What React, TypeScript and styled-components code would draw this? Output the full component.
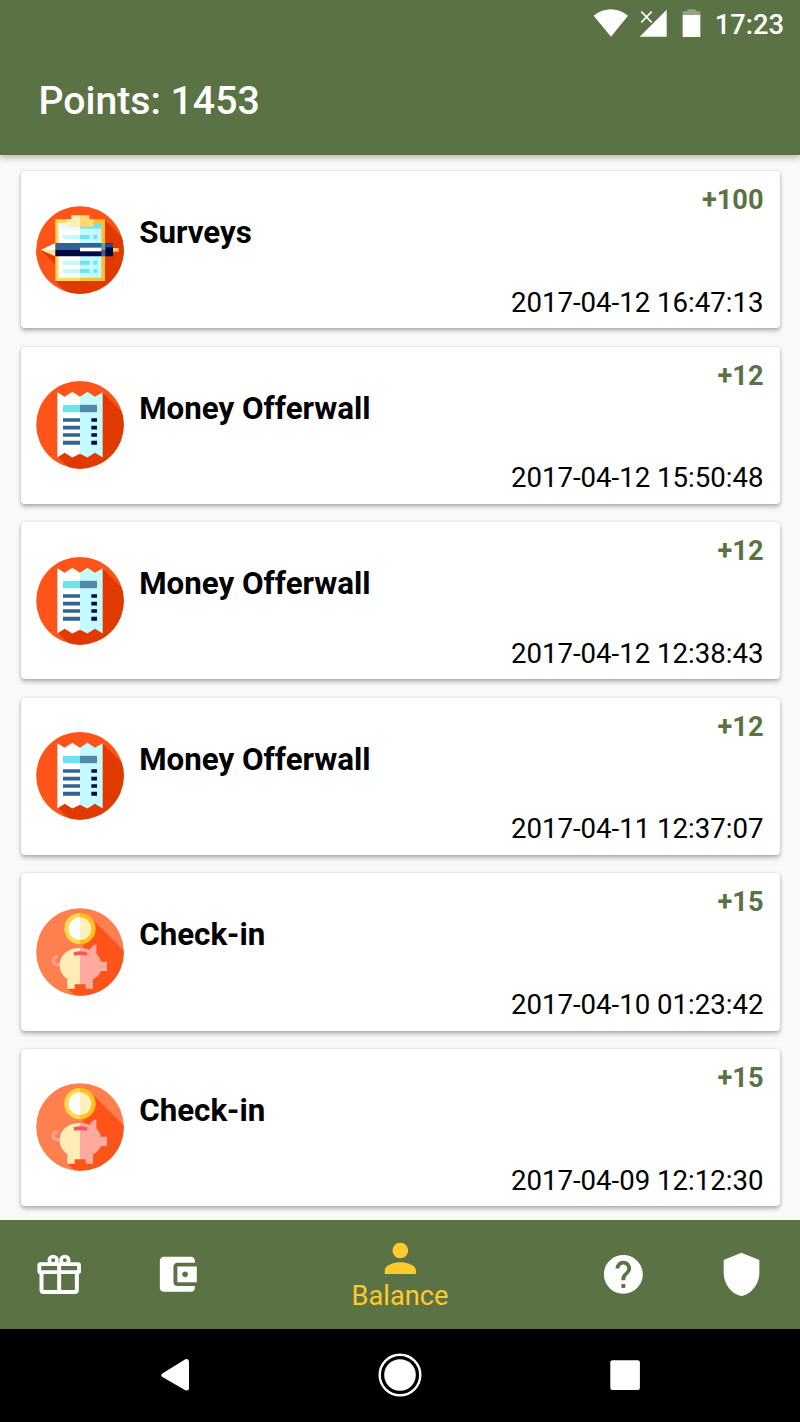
import React from 'react';
import styled, { createGlobalStyle } from 'styled-components';

const GREEN = '#5b7344';
const YELLOW = '#ffca2c';

const GlobalStyle = createGlobalStyle`
  * { box-sizing: border-box; }
  body { margin: 0; background: #fafafa; font-family: Roboto, sans-serif; }
  svg { display: block; flex: none; }
`;

const Screen = styled.div`
  display: flex;
  flex-direction: column;
  width: 800px;
  height: 1422px;
  overflow: hidden;
  background: #f9f9f9;
`;

const Header = styled.header`
  flex: none;
  height: 155px;
  background: ${GREEN};
  color: #fff;
  box-shadow: 0 2px 7px rgba(0, 0, 0, 0.32);
`;

const StatusBar = styled.div`
  display: flex;
  align-items: center;
  justify-content: flex-end;
  height: 47px;
  padding-right: 16px;
`;

const Clock = styled.span`
  margin-left: 14px;
  font-size: 27.3px;
  font-weight: 500;
  line-height: 47px;
  padding-top: 3px;
`;

const StatusIcon = styled.svg<{ $gap?: number }>`
  margin-left: ${(p) => p.$gap ?? 0}px;
  margin-top: -1px;
`;

const Title = styled.h1`
  margin: 0;
  padding-left: 38.5px;
  font-size: 39.2px;
  font-weight: 500;
  line-height: 108px;
`;

const List = styled.main`
  flex: 1;
  min-height: 0;
  display: flex;
  flex-direction: column;
  gap: 18.15px;
  padding: 16px 20.5px 0;
`;

const Card = styled.article`
  flex: none;
  display: grid;
  grid-template-columns: 88px 1fr auto;
  column-gap: 15.2px;
  height: 157.4px;
  padding: 0 16px 0 15.5px;
  border-radius: 4px;
  background: #fff;
  box-shadow: 0 3px 4px rgba(0, 0, 0, 0.26), 0 0 3px rgba(0, 0, 0, 0.16);
`;

const Badge = styled.svg`
  align-self: center;
`;

const Name = styled.h2`
  margin: 0;
  padding-top: 43px;
  font-size: 31.3px;
  font-weight: 700;
  line-height: 38px;
  color: #000;
`;

const Details = styled.div`
  display: flex;
  flex-direction: column;
  justify-content: space-between;
  align-items: flex-end;
  padding: 12px 0 8.5px;
  font-size: 27.6px;
  line-height: 34px;
  color: #000;
`;

const Amount = styled.span`
  font-size: 27.2px;
  font-weight: 700;
  color: ${GREEN};
`;

const TabBar = styled.nav`
  flex: none;
  display: grid;
  grid-template-columns: 118px 118px 1fr 118px 118px;
  height: 109px;
  background: ${GREEN};
  color: #fff;
`;

const Tab = styled.div<{ $active?: boolean }>`
  display: flex;
  flex-direction: column;
  align-items: center;
  justify-content: ${(p) => (p.$active ? 'flex-start' : 'center')};
  padding-top: ${(p) => (p.$active ? 15 : 0)}px;
  color: ${(p) => (p.$active ? YELLOW : '#fff')};
`;

const TabLabel = styled.span`
  font-size: 27.2px;
  line-height: 32px;
  margin-top: -1px;
`;

const SystemBar = styled.footer`
  flex: none;
  display: grid;
  grid-template-columns: repeat(3, 225px);
  justify-content: center;
  justify-items: center;
  align-items: center;
  height: 93.5px;
  background: #000;
`;

const SurveyBadge = () => (
  <Badge width="88" height="88" viewBox="18 17 264 264">
    <clipPath id="survey-disc"><circle cx="150" cy="149" r="131.5" /></clipPath>
    <g clipPath="url(#survey-disc)">
      <path fill="#ff5419" d="M0 0h300v300H0z" />
      <path fill="#e03a00" d="M223 57l77 77v166H134l-58-58-43-92 120-40z" />
      <path fill="#ff5419" d="M0 150h33l43 41v109H0z" />
      <path fill="#e03a00" d="M33 150l43 41v51l90 58V150z" />
    </g>
    <path fill="#ffda5b" d="M76 57h74v185H76z" />
    <path fill="#fec02d" d="M150 57h75v185h-75z" />
    <path fill="#fff" d="M86 68h64v164H86z" />
    <path fill="#c1fbff" d="M150 68h64v164h-64z" />
    <path fill="#e4fdff" d="M86 68h64v22H86z" />
    <path fill="#73e1ef" d="M150 68h64v17h-64z" />
    <path fill="#c4f8fb" d="M98 104h52v12H98zM98 181h52v12H98zM98 206h52v12H98z" />
    <path fill="#73e1ef" d="M150 104h29v12h-29zM190 104h12v12h-12zM150 181h29v12h-29zM190 181h12v12h-12zM150 206h29v12h-29zM190 206h12v12h-12z" />
    <path fill="#fff0b5" d="M109 57h15V45h26v34h-41z" />
    <path fill="#ffda70" d="M150 45h28v12h13v22h-41z" />
    <path fill="#fff" d="M32 149l44-21v21z" />
    <path fill="#ffe29a" d="M32 149h44v19z" />
    <path fill="#316493" d="M76 128h150v21H76z" />
    <path fill="#000944" d="M76 149h150v19H76zM226 129h23v39h-23z" />
    <path fill="#28507e" d="M226 129h23v12h-23z" />
    <path fill="#fff" d="M150 142h64v11h-64z" />
    <path fill="#d3f9ff" d="M214 128h12v40h-12z" opacity=".35" />
    <path fill="#ffc87a" d="M249 143h17v11h-17z" />
  </Badge>
);

const ReceiptBadge = () => (
  <Badge width="88" height="88" viewBox="18 18.5 264 264">
    <clipPath id="receipt-disc"><circle cx="150" cy="150" r="131.5" /></clipPath>
    <g clipPath="url(#receipt-disc)">
      <path fill="#ff5419" d="M0 0h300v300H0z" />
      <path fill="#e03a00" d="M218 53l82 82v165H139l-57-56 68-94z" />
    </g>
    <path fill="#fff" d="M82 52l22 14 23-15 23 15v171l-23 11-23-14-22 14z" />
    <path fill="#c4fbff" d="M150 66l22-15 23 15 23-14v196l-23-14-23 14-22-11z" />
    <path fill="#6ee3f0" d="M99 90h51v22H99z" />
    <path fill="#5487aa" d="M150 90h51v22h-51z" />
    <path fill="#316493" d="M99 130h51v11H99zM99 153h51v11H99zM99 175h51v11H99zM99 198h51v12H99z" />
    <path fill="#000944" d="M184 130h17v11h-17zM184 153h17v11h-17zM184 175h17v11h-17zM184 198h17v12h-17z" />
  </Badge>
);

const PiggyBadge = () => (
  <Badge width="88" height="88" viewBox="18 23 264 264">
    <clipPath id="piggy-disc"><circle cx="150" cy="155" r="131.5" /></clipPath>
    <g clipPath="url(#piggy-disc)">
      <path fill="#ff7f4f" d="M0 0h300v300H0z" />
      <path fill="#ff5419" d="M182 51l118 118v131H150l-38-36 38-86z" />
    </g>
    <path d="M92 192c-14 5-24-3-22-13 1-6 6-10 13-10" fill="none" stroke="#ffa392" strokeWidth="9" />
    <path fill="#ffedb5" d="M150 143c-37-1-61 22-61 51 0 18 8 32 23 42v29h22v-13h16z" />
    <path fill="#ffaa9f" d="M150 143c11 0 21 2 29 6 5-9 11-15 20-17v28c7 7 12 15 14 24h18v28h-18c-4 10-13 19-24 25v28h-22v-13h-17z" />
    <path d="M132 162q18-7 39 0" fill="none" stroke="#ff5263" strokeWidth="11" />
    <path fill="#ffda4d" d="M150 38a47 47 0 000 94z" />
    <path fill="#fec01d" d="M150 38a47 47 0 010 94z" />
    <path fill="#fff" d="M150 51a34 34 0 000 68z" />
    <path fill="#fff0be" d="M150 51a34 34 0 010 68z" />
  </Badge>
);

const badges = { survey: SurveyBadge, receipt: ReceiptBadge, piggy: PiggyBadge };

const entries: { kind: keyof typeof badges; name: string; amount: string; date: string }[] = [
  { kind: 'survey', name: 'Surveys', amount: '+100', date: '2017-04-12 16:47:13' },
  { kind: 'receipt', name: 'Money Offerwall', amount: '+12', date: '2017-04-12 15:50:48' },
  { kind: 'receipt', name: 'Money Offerwall', amount: '+12', date: '2017-04-12 12:38:43' },
  { kind: 'receipt', name: 'Money Offerwall', amount: '+12', date: '2017-04-11 12:37:07' },
  { kind: 'piggy', name: 'Check-in', amount: '+15', date: '2017-04-10 01:23:42' },
  { kind: 'piggy', name: 'Check-in', amount: '+15', date: '2017-04-09 12:12:30' },
];

export default function App() {
  return (
    <Screen>
      <GlobalStyle />
      <Header>
        <StatusBar>
          <StatusIcon width="36" height="28" viewBox="40 26 108 84" fill="#fff">
            <path d="M42 46Q93 8 145 46L94 109z" />
          </StatusIcon>
          <StatusIcon $gap={10} width="28" height="28" viewBox="178 26 84 84" fill="#fff">
            <path d="M261 28v81h-81z" />
            <path d="M185 34l31 32M216 34l-31 32" stroke="#fff" strokeWidth="5" />
          </StatusIcon>
          <StatusIcon $gap={14} width="20" height="28" viewBox="304 26 60 84" fill="#fff">
            <path opacity=".35" d="M309 33h14v-6h25v6h14v11h-53z" />
            <path d="M309 44h53v66h-53z" />
          </StatusIcon>
          <Clock>17:23</Clock>
        </StatusBar>
        <Title>Points: 1453</Title>
      </Header>
      <List>
        {entries.map((e) => {
          const Icon = badges[e.kind];
          return (
            <Card key={e.date}>
              <Icon />
              <Name>{e.name}</Name>
              <Details>
                <Amount>{e.amount}</Amount>
                <span>{e.date}</span>
              </Details>
            </Card>
          );
        })}
      </List>
      <TabBar>
        <Tab>
          <svg width="46.7" height="46.7" viewBox="107.5 183 140 140" fill="none" stroke="#fff">
            <circle cx="159" cy="211" r="11.5" strokeWidth="11" />
            <circle cx="194" cy="211" r="11.5" strokeWidth="11" />
            <rect x="117.5" y="222.5" width="119" height="24" rx="3" strokeWidth="11.5" />
            <path d="M124 246v54q0 6 6 6h94q6 0 6-6v-54M177 222v84" strokeWidth="12" />
          </svg>
        </Tab>
        <Tab>
          <svg width="46.7" height="46.7" viewBox="0 0 24 24" fill="currentColor">
            <path d="M21 18v1c0 1.1-.9 2-2 2H5c-1.11 0-2-.9-2-2V5c0-1.1.89-2 2-2h14c1.1 0 2 .9 2 2v1h-9c-1.11 0-2 .9-2 2v8c0 1.1.89 2 2 2h9zm-9-2h10V8H12v8zm4-2.5c-.83 0-1.5-.67-1.5-1.5s.67-1.5 1.5-1.5 1.5.67 1.5 1.5-.67 1.5-1.5 1.5z" />
          </svg>
        </Tab>
        <Tab $active>
          <svg width="46.7" height="46.7" viewBox="0 0 24 24" fill="currentColor">
            <path d="M12 12c2.21 0 4-1.79 4-4s-1.79-4-4-4-4 1.79-4 4 1.79 4 4 4zm0 2c-2.67 0-8 1.34-8 4v2h16v-2c0-2.66-5.33-4-8-4z" />
          </svg>
          <TabLabel>Balance</TabLabel>
        </Tab>
        <Tab>
          <svg width="46.7" height="46.7" viewBox="0 0 24 24" fill="currentColor">
            <path d="M12 2C6.48 2 2 6.48 2 12s4.48 10 10 10 10-4.48 10-10S17.52 2 12 2zm1 17h-2v-2h2v2zm2.07-7.75l-.9.92C13.45 12.9 13 13.5 13 15h-2v-.5c0-1.1.45-2.1 1.17-2.83l1.24-1.26c.37-.36.59-.86.59-1.41 0-1.1-.9-2-2-2s-2 .9-2 2H8c0-2.21 1.79-4 4-4s4 1.79 4 4c0 .88-.36 1.68-.93 2.25z" />
          </svg>
        </Tab>
        <Tab>
          <svg width="46.7" height="46.7" viewBox="563 183 140 140" fill="currentColor">
            <path d="M633 188L687 210V249C687 284 660 314 633 318C606 314 580 284 580 249V210Z" />
          </svg>
        </Tab>
      </TabBar>
      <SystemBar>
        <svg width="48" height="48" viewBox="453 484 144 144" fill="#fff">
          <path d="M486 552L556 509Q567 506 567 516V596Q567 605 556 602L486 561Q481 556 486 552Z" />
        </svg>
        <svg width="48" height="48" viewBox="0 0 48 48">
          <circle cx="24" cy="24" r="20.3" fill="none" stroke="#fff" strokeWidth="2.4" />
          <circle cx="24" cy="24" r="15.8" fill="#fff" />
        </svg>
        <svg width="48" height="48" viewBox="0 0 48 48">
          <rect x="9.3" y="9.3" width="29.6" height="29.6" rx="2" fill="#fff" />
        </svg>
      </SystemBar>
    </Screen>
  );
}
